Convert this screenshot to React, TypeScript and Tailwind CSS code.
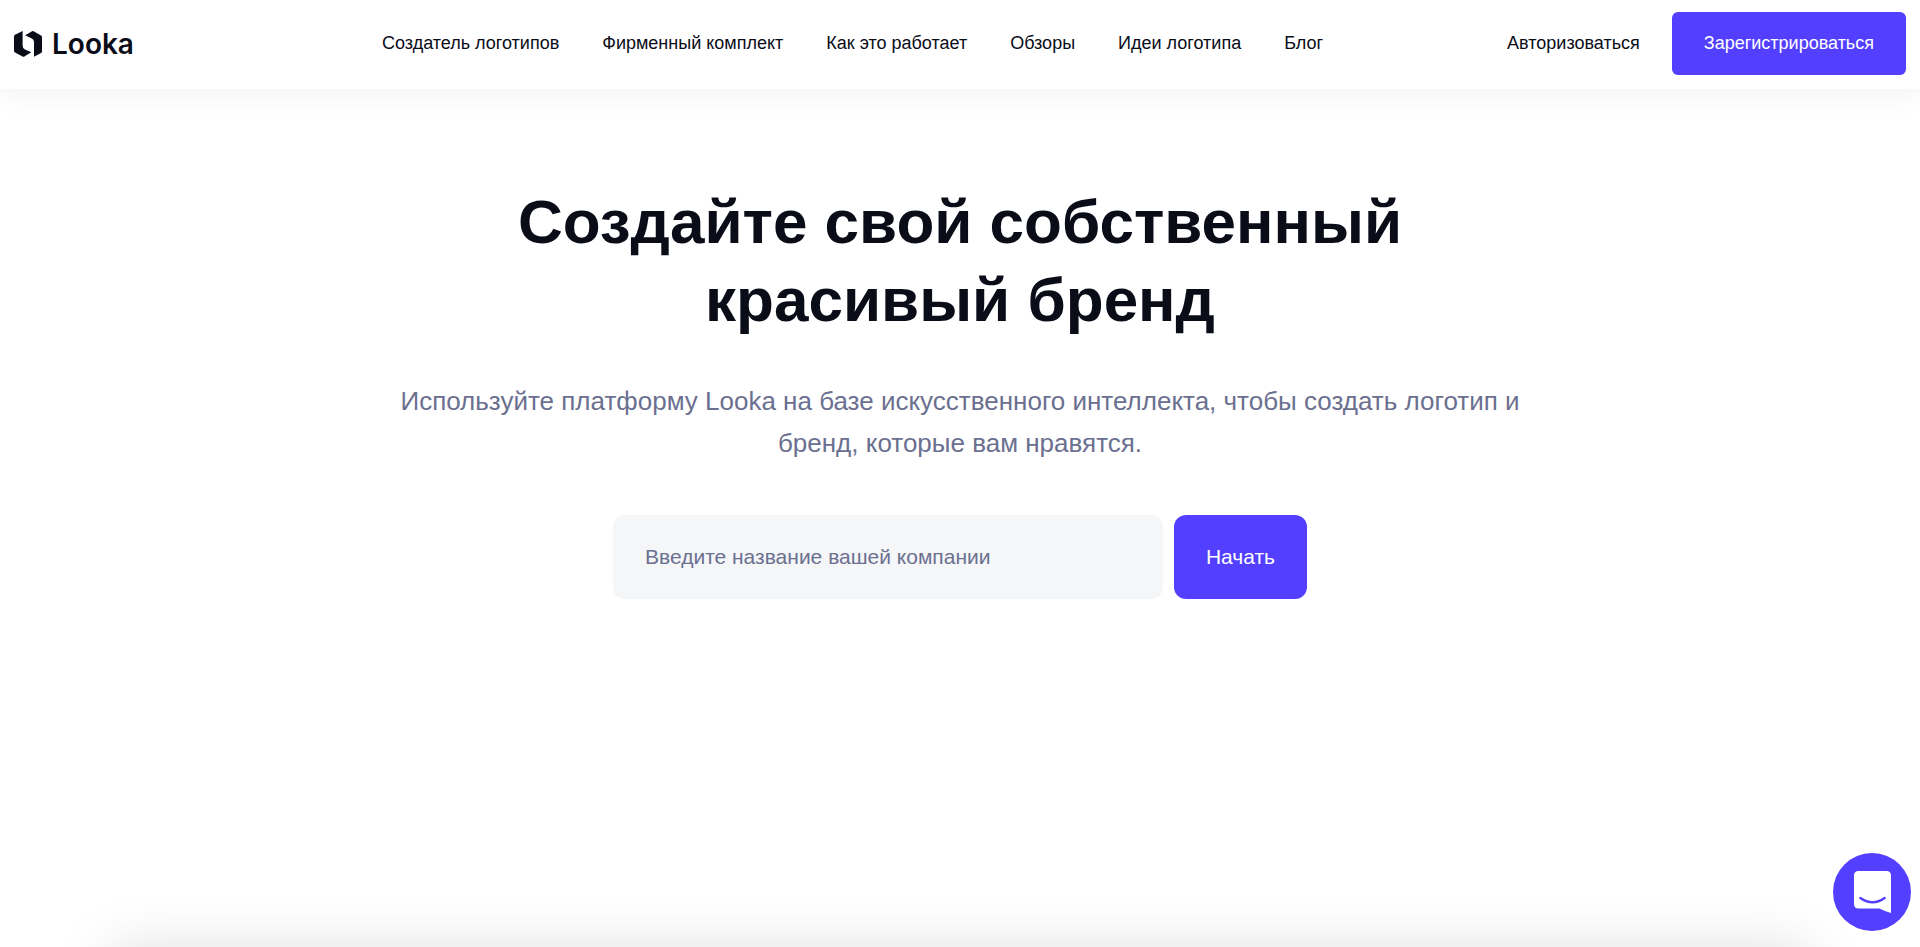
const navLinks = [
  "Создатель логотипов",
  "Фирменный комплект",
  "Как это работает",
  "Обзоры",
  "Идеи логотипа",
  "Блог",
]

function Logo() {
  return (
    <a href="#" className="flex items-center gap-2.5">
      <svg width="28" height="26" viewBox="0 0 28 26" fill="currentColor" aria-hidden="true">
        <path d="M8.6 0 V14.6 Q8.6 17.6 11 18.6 L17.3 21.2 L10 25.7 Q9.3 26 8.6 25.6 L1 21.4 Q0 20.8 0 19.8 V5.4 Q0 4.3 1 3.8 Z" />
        <path d="M11.2 4.2 L18.1 0.3 Q18.9 -0.1 19.7 0.3 L27 4.6 Q28 5.1 28 6.2 V20.4 Q28 21.6 27 22.1 L20 25.8 V11 Q20 8.6 17.8 7.6 Z" />
      </svg>
      <span className="font-[Inter,sans-serif] text-[28px] leading-8 font-semibold">Looka</span>
    </a>
  )
}

function Header() {
  return (
    <header className="relative z-10 flex items-center justify-between bg-white px-3.5 pt-3 pb-3.5 text-lg leading-[27px] shadow-[0_6px_28px_rgba(10,12,60,0.05)]">
      <Logo />
      <nav className="flex gap-[43px] pl-16">
        {navLinks.map((label) => (
          <a key={label} href="#" className="whitespace-nowrap">
            {label}
          </a>
        ))}
      </nav>
      <div className="flex items-center gap-8">
        <a href="#">Авторизоваться</a>
        <a href="#" className="rounded-md bg-[#533fff] px-8 py-[18px] text-white">
          Зарегистрироваться
        </a>
      </div>
    </header>
  )
}

function Hero() {
  return (
    <main className="mx-auto flex max-w-[1140px] flex-col items-center pt-[94px] text-center">
      <h1 className="max-w-[960px] text-[62px] leading-[78px] font-bold">
        Создайте свой собственный красивый бренд
      </h1>
      <p className="mt-[41px] text-[26px] leading-[42px] text-[#6b7090]">
        Используйте платформу Looka на базе искусственного интеллекта, чтобы создать логотип и
        бренд, которые вам нравятся.
      </p>
      <form className="mt-[51px] flex w-full max-w-[694px] gap-[11px] text-[21px]">
        <input
          type="text"
          aria-label="Введите название вашей компании"
          placeholder="Введите название вашей компании"
          className="h-[84px] min-w-0 flex-1 rounded-xl bg-[#f4f6f8] px-8 placeholder:text-[#6b7090]"
        />
        <button type="button" className="rounded-xl bg-[#533fff] px-8 text-white">
          Начать
        </button>
      </form>
    </main>
  )
}

function ChatButton() {
  return (
    <button
      type="button"
      aria-label="Chat"
      className="fixed right-[9px] bottom-4 z-20 flex size-[78px] items-center justify-center rounded-full bg-[#533fff]"
    >
      <svg width="37" height="42" viewBox="0 0 37 42" aria-hidden="true">
        <path
          d="M4.5 0 H32.5 Q37 0 37 4.5 V42 Q31.5 40.8 25.5 37.6 H4.5 Q0 37.6 0 33.1 V4.5 Q0 0 4.5 0 Z"
          fill="#fff"
        />
        <path
          d="M6.4 27 Q18.5 35.6 30.6 27"
          fill="none"
          stroke="#533fff"
          strokeWidth="2.4"
          strokeLinecap="round"
        />
      </svg>
    </button>
  )
}

export default function App() {
  return (
    <div className="relative min-h-screen overflow-hidden bg-white font-['Liberation_Sans',Arial,sans-serif] text-[#0a0c18]">
      <Header />
      <Hero />
      {/* next section sits below the fold, only its shadow shows */}
      <div className="absolute inset-x-[110px] top-full h-40 shadow-[0_4px_60px_rgba(0,0,0,0.14)]" />
      <ChatButton />
    </div>
  )
}
